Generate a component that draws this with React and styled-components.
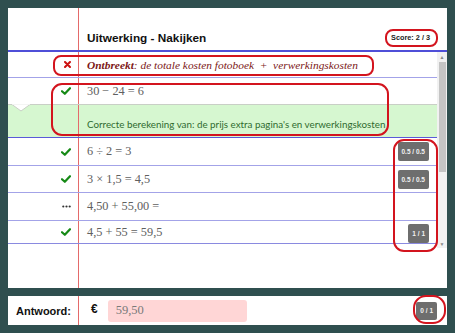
import React from "react";
import styled, { createGlobalStyle } from "styled-components";

const Global = createGlobalStyle`
  html, body { margin: 0; padding: 0; background: #2f4f4f; }
  * { box-sizing: border-box; }
`;

const Frame = styled.div`
  position: relative;
  width: 455px;
  height: 333px;
  background: #2f4f4f;
  padding: 8px;
  display: flex;
  flex-direction: column;
  gap: 8px;
  font-family: "Liberation Sans", Arial, sans-serif;
`;

const MainPanel = styled.div`
  height: 280px;
  background: #fff;
  display: flex;
  flex-direction: column;
`;

const Header = styled.div`
  height: 44px;
  display: grid;
  grid-template-columns: 71px 1fr auto;
  border-bottom: 2px solid #4f4fd8;
  flex: none;
`;

const Margin = styled.div`
  border-right: 1px solid #e46a6a;
  display: flex;
  align-items: center;
  justify-content: flex-end;
  padding-right: ${(p) => p.$pr ?? 7}px;
  position: relative;
`;

const Title = styled.div`
  align-self: end;
  padding: 0 0 4px 8px;
  font-weight: bold;
  font-size: 11.8px;
  line-height: 15px;
  color: #111;
`;

const Score = styled.div`
  align-self: end;
  padding: 0 17px 7px 0;
  font-size: 7.3px;
  font-weight: bold;
  color: #222;
  line-height: 10px;
`;

const Body = styled.div`
  flex: 1;
  display: flex;
`;

const List = styled.div`
  flex: 1;
  display: flex;
  flex-direction: column;
`;

const Row = styled.div`
  height: ${(p) => p.$h}px;
  display: grid;
  grid-template-columns: 71px 1fr auto;
  border-bottom: ${(p) => (p.$line ? `1px solid ${p.$line}` : "none")};
  flex: none;
`;

const Spacer = styled.div`
  flex: 1;
  display: grid;
  grid-template-columns: 71px 1fr;
`;

const Cell = styled.div`
  display: flex;
  align-items: center;
  padding-left: 8px;
`;

const BadgeCell = styled.div`
  display: flex;
  align-items: ${(p) => p.$align || "center"};
  justify-content: flex-end;
  padding-right: ${(p) => p.$pr ?? 8}px;
`;

const Math = styled.span`
  font-family: "Liberation Serif", "Times New Roman", serif;
  font-size: 12.3px;
  color: #606060;
  white-space: nowrap;
`;

const Missing = styled.span`
  font-family: "Liberation Serif", "Times New Roman", serif;
  font-style: italic;
  font-size: 11.4px;
  color: #7c1717;
  white-space: nowrap;
  b { font-weight: bold; }
`;

const Feedback = styled.div`
  height: 34px;
  display: grid;
  grid-template-columns: 71px 1fr;
  background: #d6f7d0;
  border-top: 1px solid #c9cfc6;
  border-bottom: 1px solid #5a5ad8;
  flex: none;
`;

const FeedbackText = styled.div`
  align-self: end;
  padding: 0 0 7px 8px;
  font-family: Lato, "Noto Sans", sans-serif;
  font-size: 9.8px;
  color: #2f6b2f;
  white-space: nowrap;
`;

const Notch = styled.svg`
  position: absolute;
  left: 4px;
  top: -1px;
`;

const Badge = styled.div`
  height: ${(p) => p.$h || 19}px;
  min-width: ${(p) => p.$w || 18}px;
  padding: 0 4px;
  background: #6e6e6e;
  border-radius: 2px;
  color: #f2f2f2;
  font-size: 6.5px;
  font-weight: bold;
  display: flex;
  align-items: center;
  justify-content: center;
  white-space: nowrap;
`;

const Scrollbar = styled.div`
  width: 10px;
  height: 196px;
  background: #f1f1f1;
  display: flex;
  flex-direction: column;
  align-items: center;
  padding-top: 2px;
  flex: none;
`;

const Arrow = styled.div`
  height: 7px;
  font-size: 5px;
  line-height: 7px;
  color: #888;
`;

const Thumb = styled.div`
  width: 7px;
  height: 110px;
  background: #c4c4c4;
  margin-top: 1px;
`;

const Track = styled.div`
  flex: 1;
`;

const AnswerPanel = styled.div`
  height: 29px;
  background: #fff;
  display: grid;
  grid-template-columns: 71px 1fr auto;
`;

const Label = styled.span`
  font-weight: bold;
  font-size: 11px;
  color: #111;
`;

const AnswerCell = styled.div`
  display: flex;
  align-items: center;
  padding-left: 12px;
  gap: 10px;
`;

const Euro = styled.span`
  font-weight: bold;
  font-size: 12px;
  color: #111;
  margin-top: -3px;
`;

const Input = styled.div`
  width: 139px;
  height: 22px;
  background: #ffd6d6;
  border-radius: 3px;
  display: flex;
  align-items: center;
  padding-left: 8px;
  font-family: "Liberation Serif", "Times New Roman", serif;
  font-size: 12.5px;
  color: #7a7a7a;
`;

const Ring = styled.div`
  position: absolute;
  left: ${(p) => p.$x}px;
  top: ${(p) => p.$y}px;
  width: ${(p) => p.$w}px;
  height: ${(p) => p.$h}px;
  border: 2px solid #d3141e;
  border-radius: ${(p) => p.$r}px;
  pointer-events: none;
`;

const Cross = () => (
  <svg width="7" height="7" viewBox="0 0 7 7">
    <path d="M1 1 L6 6 M6 1 L1 6" stroke="#cc1111" strokeWidth="2" strokeLinecap="round" />
  </svg>
);

const Check = () => (
  <svg width="10" height="8" viewBox="0 0 10 8">
    <path d="M1 4.2 L3.8 6.8 L9 1.2" stroke="#168a16" strokeWidth="2.2" fill="none" strokeLinecap="round" strokeLinejoin="round" />
  </svg>
);

const Dots = () => (
  <svg width="9" height="3" viewBox="0 0 9 3">
    <circle cx="1.3" cy="1.5" r="1.1" fill="#333" />
    <circle cx="4.5" cy="1.5" r="1.1" fill="#333" />
    <circle cx="7.7" cy="1.5" r="1.1" fill="#333" />
  </svg>
);

const LINE = "#a3a3e8";

const steps = [
  { math: "6 ÷ 2 = 3", icon: <Check />, badge: "0.5 / 0.5", h: 28, line: LINE },
  { math: "3 × 1,5 = 4,5", icon: <Check />, badge: "0.5 / 0.5", h: 27, line: LINE },
  { math: "4,50 + 55,00 =", icon: <Dots />, badge: null, h: 28, line: LINE },
  { math: "4,5 + 55 = 59,5", icon: <Check />, badge: "1 / 1", h: 23, line: "#8a8ae0", small: true },
];

export default function App() {
  return (
    <>
      <Global />
      <Frame>
        <MainPanel>
          <Header>
            <Margin />
            <Title>Uitwerking - Nakijken</Title>
            <Score>Score: 2 / 3</Score>
          </Header>
          <Body>
            <List>
              <Row $h={26} $line={LINE}>
                <Margin>
                  <Cross />
                </Margin>
                <Cell>
                  <Missing>
                    <b>Ontbreekt</b>: de totale kosten fotoboek&nbsp; + &nbsp;verwerkingskosten
                  </Missing>
                </Cell>
                <BadgeCell />
              </Row>
              <Row $h={26}>
                <Margin>
                  <Check />
                </Margin>
                <Cell>
                  <Math>30 − 24 = 6</Math>
                </Cell>
                <BadgeCell />
              </Row>
              <Feedback>
                <Margin>
                  <Notch width="18" height="8" viewBox="0 0 18 8">
                    <path d="M0 0.5 L9 7 L18 0.5" fill="#fff" stroke="#c9cfc6" strokeWidth="1" />
                    <rect x="0" y="0" width="18" height="0.6" fill="#fff" />
                  </Notch>
                </Margin>
                <FeedbackText>
                  Correcte berekening van: de prijs extra pagina's en verwerkingskosten
                </FeedbackText>
              </Feedback>
              {steps.map((s) => (
                <Row key={s.math} $h={s.h} $line={s.line}>
                  <Margin>{s.icon}</Margin>
                  <Cell>
                    <Math>{s.math}</Math>
                  </Cell>
                  <BadgeCell $align={s.small ? "flex-end" : "center"}>
                    {s.badge && <Badge $w={s.small ? 18 : 29}>{s.badge}</Badge>}
                  </BadgeCell>
                </Row>
              ))}
              <Spacer>
                <Margin />
                <div />
              </Spacer>
            </List>
            <Scrollbar>
              <Arrow>▲</Arrow>
              <Thumb />
              <Track />
              <Arrow>▼</Arrow>
            </Scrollbar>
          </Body>
        </MainPanel>
        <AnswerPanel>
          <Margin>
            <Label>Antwoord:</Label>
          </Margin>
          <AnswerCell>
            <Euro>€</Euro>
            <Input>59,50</Input>
          </AnswerCell>
          <BadgeCell $pr={10}>
            <Badge $h={18} $w={18}>0 / 1</Badge>
          </BadgeCell>
        </AnswerPanel>
        <Ring $x={385} $y={29} $w={53} $h={18} $r={8} />
        <Ring $x={53} $y={55} $w={321} $h={21} $r={8} />
        <Ring $x={51} $y={83} $w={338} $h={53} $r={11} />
        <Ring $x={393} $y={139} $w={45} $h={113} $r={11} />
        <Ring $x={413} $y={295} $w={33} $h={29} $r={13} />
      </Frame>
    </>
  );
}
